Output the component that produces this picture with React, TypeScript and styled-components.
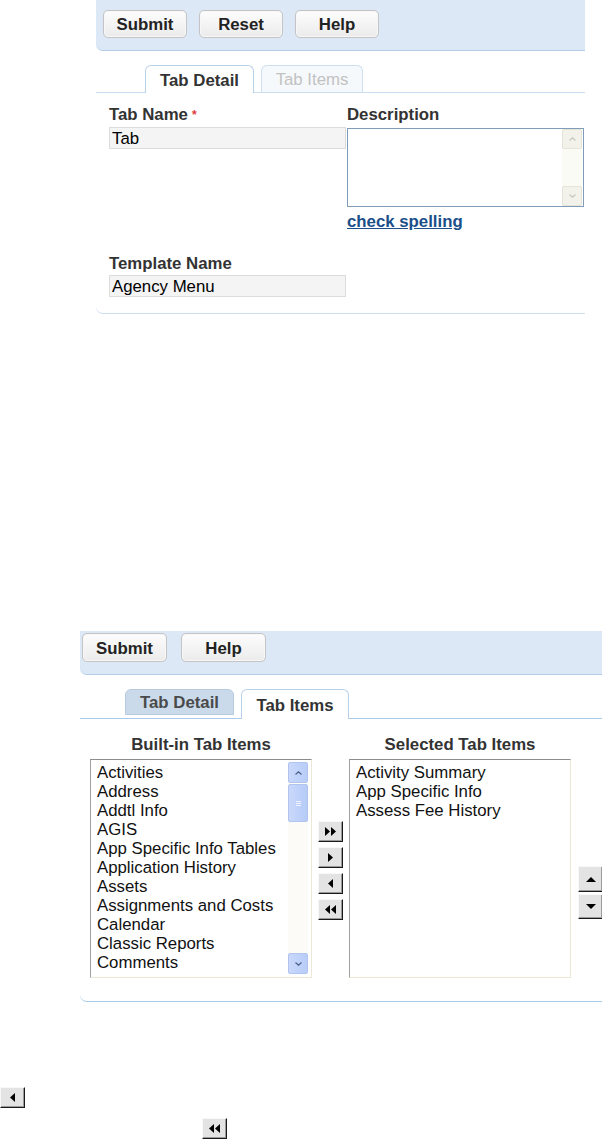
import React from "react";
import styled, { createGlobalStyle, css } from "styled-components";

const FS = "16.8px";

const GlobalStyle = createGlobalStyle`
  html, body {
    margin: 0;
    padding: 0;
    background: #fff;
  }
  body {
    font-family: "Liberation Sans", Arial, sans-serif;
    overflow: hidden;
  }
`;

const Page = styled.div`
  width: 602px;
  height: 1139px;
  overflow: hidden;
  display: flex;
  flex-direction: column;
`;

const Section = styled.section<{ $left: number; $width: number; $top: number }>`
  margin-left: ${(p) => p.$left}px;
  margin-top: ${(p) => p.$top}px;
  width: ${(p) => p.$width}px;
  display: flex;
  flex-direction: column;
  flex-shrink: 0;
`;

const Toolbar = styled.div<{ $height: number; $padTop: number; $padLeft: number; $gap: number }>`
  box-sizing: border-box;
  height: ${(p) => p.$height}px;
  padding: ${(p) => p.$padTop}px 0 0 ${(p) => p.$padLeft}px;
  display: flex;
  align-items: flex-start;
  gap: ${(p) => p.$gap}px;
  background: #dce8f5;
  border-bottom: 1px solid #b4cee9;
  border-bottom-left-radius: 7px;
`;

const ActionButton = styled.button<{ $w: number; $h: number }>`
  box-sizing: border-box;
  width: ${(p) => p.$w}px;
  height: ${(p) => p.$h}px;
  padding: 2px 0 0;
  font-family: "Liberation Sans", Arial, sans-serif;
  font-size: ${FS};
  font-weight: bold;
  color: #222;
  background: linear-gradient(#fdfdfd, #ebebeb);
  border: 1px solid #c4c4c4;
  border-radius: 5px;
  box-shadow: inset 0 0 0 1px #f7f7f7;
`;

const TabBar = styled.div<{ $padLeft: number; $gap: number; $line: string }>`
  margin-top: 14px;
  padding-left: ${(p) => p.$padLeft}px;
  display: flex;
  align-items: flex-end;
  gap: ${(p) => p.$gap}px;
  border-bottom: 1px solid ${(p) => p.$line};
`;

const Tab = styled.div<{ $w: number; $h: number; $variant: "active" | "faded" | "dim" }>`
  box-sizing: border-box;
  width: ${(p) => p.$w}px;
  height: ${(p) => p.$h}px;
  display: flex;
  align-items: center;
  justify-content: center;
  font-size: ${FS};
  font-weight: bold;
  border-radius: 6px 6px 0 0;
  border: 1px solid;
  border-bottom: none;
  ${(p) =>
    p.$variant === "active"
      ? css`
          background: #fff;
          color: #333;
          border-color: #b9d2ec;
          margin-bottom: -1px;
          padding-top: 2px;
        `
      : p.$variant === "faded"
      ? css`
          background: #f6f9fc;
          color: #c2c2c2;
          border-color: #cddff1;
          font-weight: normal;
          padding-top: 1px;
        `
      : css`
          background: #cbdaea;
          color: #4a4a4a;
          border-color: #b6cbe0;
          margin-bottom: 3px;
          border-bottom: 1px solid #b6cbe0;
          padding-top: 1px;
        `}
`;

/* ---------- Tab Detail form ---------- */

const FormPanel = styled.div`
  padding: 13px 0 16px 13px;
  border-bottom: 1px solid #cfe0f2;
  border-bottom-left-radius: 7px;
`;

const FormGrid = styled.div`
  display: grid;
  grid-template-columns: 238px 238px;
  grid-template-areas: "name desc" "template .";
  row-gap: 24px;
`;

const Field = styled.div<{ $area: string }>`
  grid-area: ${(p) => p.$area};
  display: flex;
  flex-direction: column;
  align-items: flex-start;
`;

const Label = styled.label`
  font-size: ${FS};
  line-height: 18px;
  font-weight: bold;
  color: #333;
`;

const Required = styled.span`
  color: #e23a3a;
  font-size: 12px;
  vertical-align: top;
  margin-left: 4px;
`;

const TextInput = styled.div<{ $mt: number }>`
  box-sizing: border-box;
  margin-top: ${(p) => p.$mt}px;
  width: 237px;
  height: 22px;
  padding: 1px 2px;
  font-size: ${FS};
  line-height: 19px;
  color: #000;
  background: #f4f4f4;
  border: 1px solid #dcdcdc;
`;

const TextArea = styled.div`
  box-sizing: border-box;
  margin-top: 4px;
  width: 237px;
  height: 79px;
  display: flex;
  justify-content: flex-end;
  background: #fff;
  border: 1px solid #7f9db9;
`;

const GreyScroll = styled.div`
  width: 20px;
  margin-right: 1px;
  display: flex;
  flex-direction: column;
  justify-content: space-between;
  background: #fbfbf6;
`;

const GreyScrollButton = styled.div`
  box-sizing: border-box;
  width: 20px;
  height: 20px;
  display: flex;
  align-items: center;
  justify-content: center;
  background: #f3f2ea;
  border: 1px solid #e6e4d8;
  border-radius: 2px;
`;

const SpellLink = styled.a`
  margin-top: 6px;
  font-size: ${FS};
  line-height: 18px;
  font-weight: bold;
  color: #1b4f8a;
  text-decoration: underline;
`;

/* ---------- Tab Items ---------- */

const ItemsPanel = styled.div`
  padding: 17px 0 23px 10px;
  border-bottom: 1px solid #a9cbe9;
  border-bottom-left-radius: 7px;
`;

const ListsRow = styled.div`
  display: flex;
  align-items: flex-start;
`;

const ListColumn = styled.div<{ $ml: number }>`
  width: 222px;
  margin-left: ${(p) => p.$ml}px;
  flex-shrink: 0;
  display: flex;
  flex-direction: column;
`;

const ListTitle = styled.div`
  text-align: center;
  font-size: ${FS};
  line-height: 18px;
  font-weight: bold;
  color: #333;
  margin-bottom: 5px;
`;

const ListBox = styled.div`
  box-sizing: border-box;
  height: 219px;
  display: flex;
  background: #fff;
  border: 1px solid;
  border-color: #8c8c8c #ebe8d6 #ebe8d6 #a0a0a0;
`;

const ListItems = styled.ul`
  flex: 1;
  margin: 0;
  padding: 3px 0 0 6px;
  list-style: none;
  font-size: ${FS};
  line-height: 19px;
  color: #111;
  white-space: nowrap;
  overflow: hidden;
`;

const BlueScroll = styled.div`
  width: 20px;
  margin: 2px 3px 3px 0;
  display: flex;
  flex-direction: column;
  background: #fcfbf7;
`;

const BlueScrollButton = styled.div`
  box-sizing: border-box;
  width: 20px;
  height: 21px;
  display: flex;
  align-items: center;
  justify-content: center;
  background: linear-gradient(90deg, #c9d8fc, #b8cdf8);
  border: 1px solid #b0c4ef;
  border-radius: 2px;
`;

const BlueThumb = styled.div`
  box-sizing: border-box;
  margin-top: 1px;
  width: 20px;
  height: 38px;
  display: flex;
  flex-direction: column;
  align-items: center;
  justify-content: center;
  gap: 1px;
  background: linear-gradient(90deg, #c9d8fc, #b6cbf7);
  border: 1px solid #b0c4ef;
  border-radius: 2px;
`;

const Grip = styled.span`
  width: 5px;
  height: 1px;
  background: #eef3fe;
`;

const Spacer = styled.div`
  flex: 1;
`;

const ButtonStack = styled.div<{ $top: number; $gap: number; $left: number }>`
  margin-top: ${(p) => p.$top}px;
  margin-left: ${(p) => p.$left}px;
  flex-shrink: 0;
  display: flex;
  flex-direction: column;
  gap: ${(p) => p.$gap}px;
`;

const ArrowButton = styled.button<{ $h: number; $ml?: number; $mt?: number }>`
  box-sizing: border-box;
  width: 25px;
  height: ${(p) => p.$h}px;
  margin-left: ${(p) => p.$ml ?? 0}px;
  margin-top: ${(p) => p.$mt ?? 0}px;
  padding: 0;
  display: flex;
  align-items: center;
  justify-content: center;
  background: #e3e3e3;
  border: 1px solid;
  border-color: #f8f8f8 #1a1a1a #1a1a1a #f8f8f8;
  box-shadow: inset -1px -1px 0 #9a9a9a;
  flex-shrink: 0;
`;

const StrayArea = styled.div`
  margin-top: 85px;
  display: flex;
  flex-direction: column;
  align-items: flex-start;
`;

/* ---------- icons ---------- */

type Dir = "left" | "right" | "up" | "down";

const Triangle = ({ dir, double }: { dir: Dir; double?: boolean }) => {
  if (dir === "up" || dir === "down") {
    const pts = dir === "up" ? "0,5 5,0 10,5" : "0,0 10,0 5,5";
    return (
      <svg width="10" height="5" viewBox="0 0 10 5">
        <polygon points={pts} fill="#000" />
      </svg>
    );
  }
  const one = (x: number) =>
    dir === "right" ? `${x},0 ${x + 5},4.5 ${x},9` : `${x + 5},0 ${x},4.5 ${x + 5},9`;
  const w = double ? 11 : 5;
  return (
    <svg width={w} height="9" viewBox={`0 0 ${w} 9`}>
      <polygon points={one(0)} fill="#000" />
      {double && <polygon points={one(6)} fill="#000" />}
    </svg>
  );
};

const Chevron = ({ up, color }: { up?: boolean; color: string }) => (
  <svg width="7" height="4" viewBox="0 0 7 4">
    <polyline
      points={up ? "0.5,3.5 3.5,0.8 6.5,3.5" : "0.5,0.5 3.5,3.2 6.5,0.5"}
      fill="none"
      stroke={color}
      strokeWidth="1.2"
    />
  </svg>
);

const builtIn = [
  "Activities",
  "Address",
  "Addtl Info",
  "AGIS",
  "App Specific Info Tables",
  "Application History",
  "Assets",
  "Assignments and Costs",
  "Calendar",
  "Classic Reports",
  "Comments",
];

const selected = ["Activity Summary", "App Specific Info", "Assess Fee History"];

export default function App() {
  return (
    <>
      <GlobalStyle />
      <Page>
        <Section $left={96} $width={489} $top={0}>
          <Toolbar $height={51} $padTop={10} $padLeft={7} $gap={12}>
            <ActionButton $w={84} $h={28}>Submit</ActionButton>
            <ActionButton $w={84} $h={28}>Reset</ActionButton>
            <ActionButton $w={84} $h={28}>Help</ActionButton>
          </Toolbar>
          <TabBar $padLeft={49} $gap={7} $line="#cadcef">
            <Tab $w={109} $h={28} $variant="active">Tab Detail</Tab>
            <Tab $w={102} $h={27} $variant="faded">Tab Items</Tab>
          </TabBar>
          <FormPanel>
            <FormGrid>
              <Field $area="name">
                <Label>
                  Tab Name<Required>*</Required>
                </Label>
                <TextInput $mt={3}>Tab</TextInput>
              </Field>
              <Field $area="desc">
                <Label>Description</Label>
                <TextArea>
                  <GreyScroll>
                    <GreyScrollButton>
                      <Chevron up color="#c6c6c0" />
                    </GreyScrollButton>
                    <GreyScrollButton>
                      <Chevron color="#c6c6c0" />
                    </GreyScrollButton>
                  </GreyScroll>
                </TextArea>
                <SpellLink>check spelling</SpellLink>
              </Field>
              <Field $area="template">
                <Label>Template Name</Label>
                <TextInput $mt={2}>Agency Menu</TextInput>
              </Field>
            </FormGrid>
          </FormPanel>
        </Section>

        <Section $left={80} $width={522} $top={317}>
          <Toolbar $height={44} $padTop={2} $padLeft={2} $gap={14}>
            <ActionButton $w={85} $h={29}>Submit</ActionButton>
            <ActionButton $w={85} $h={29}>Help</ActionButton>
          </Toolbar>
          <TabBar $padLeft={45} $gap={7} $line="#a9cbe9">
            <Tab $w={109} $h={26} $variant="dim">Tab Detail</Tab>
            <Tab $w={108} $h={30} $variant="active">Tab Items</Tab>
          </TabBar>
          <ItemsPanel>
            <ListsRow>
              <ListColumn $ml={0}>
                <ListTitle>Built-in Tab Items</ListTitle>
                <ListBox>
                  <ListItems>
                    {builtIn.map((item) => (
                      <li key={item}>{item}</li>
                    ))}
                  </ListItems>
                  <BlueScroll>
                    <BlueScrollButton>
                      <Chevron up color="#4d6185" />
                    </BlueScrollButton>
                    <BlueThumb>
                      <Grip />
                      <Grip />
                      <Grip />
                    </BlueThumb>
                    <Spacer />
                    <BlueScrollButton>
                      <Chevron color="#4d6185" />
                    </BlueScrollButton>
                  </BlueScroll>
                </ListBox>
              </ListColumn>
              <ButtonStack $top={85} $gap={5} $left={6}>
                <ArrowButton $h={21}>
                  <Triangle dir="right" double />
                </ArrowButton>
                <ArrowButton $h={21}>
                  <Triangle dir="right" />
                </ArrowButton>
                <ArrowButton $h={21}>
                  <Triangle dir="left" />
                </ArrowButton>
                <ArrowButton $h={21}>
                  <Triangle dir="left" double />
                </ArrowButton>
              </ButtonStack>
              <ListColumn $ml={6}>
                <ListTitle>Selected Tab Items</ListTitle>
                <ListBox>
                  <ListItems>
                    {selected.map((item) => (
                      <li key={item}>{item}</li>
                    ))}
                  </ListItems>
                </ListBox>
              </ListColumn>
              <ButtonStack $top={130} $gap={2} $left={7}>
                <ArrowButton $h={26}>
                  <Triangle dir="up" />
                </ArrowButton>
                <ArrowButton $h={25}>
                  <Triangle dir="down" />
                </ArrowButton>
              </ButtonStack>
            </ListsRow>
          </ItemsPanel>
        </Section>

        <StrayArea>
          <ArrowButton $h={21}>
            <Triangle dir="left" />
          </ArrowButton>
          <ArrowButton $h={21} $ml={202} $mt={10}>
            <Triangle dir="left" double />
          </ArrowButton>
        </StrayArea>
      </Page>
    </>
  );
}
